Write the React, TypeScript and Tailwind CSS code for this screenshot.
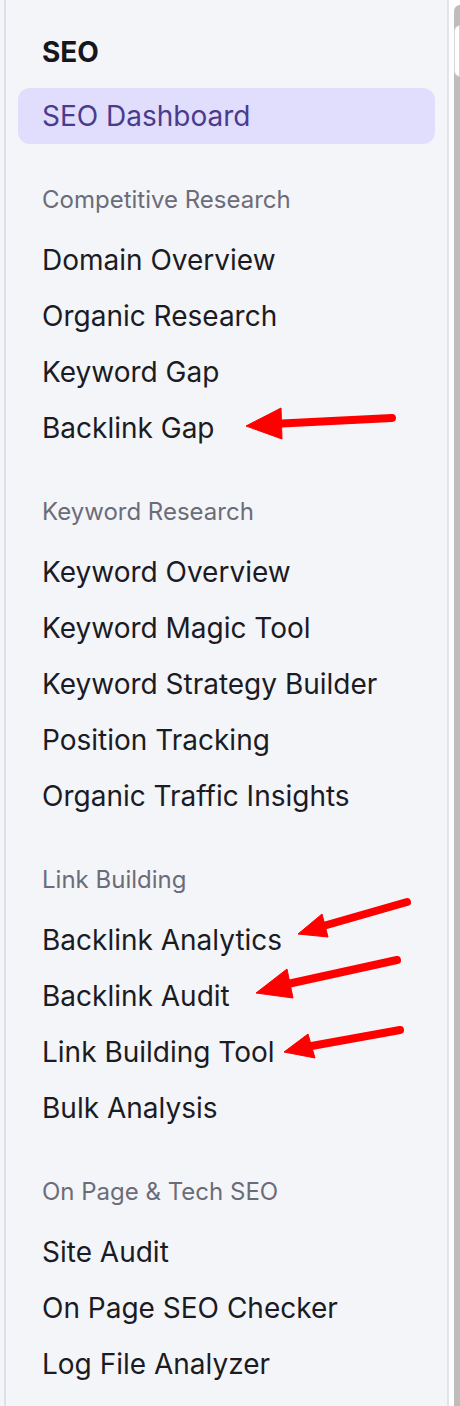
const sections = [
  {
    title: "Competitive Research",
    items: ["Domain Overview", "Organic Research", "Keyword Gap", "Backlink Gap"],
  },
  {
    title: "Keyword Research",
    items: [
      "Keyword Overview",
      "Keyword Magic Tool",
      "Keyword Strategy Builder",
      "Position Tracking",
      "Organic Traffic Insights",
    ],
  },
  {
    title: "Link Building",
    items: ["Backlink Analytics", "Backlink Audit", "Link Building Tool", "Bulk Analysis"],
  },
  {
    title: "On Page & Tech SEO",
    items: ["Site Audit", "On Page SEO Checker", "Log File Analyzer"],
  },
]

// red annotation arrows: tail -> tip, plus the two head corners
const arrows = [
  { tail: [392, 418], tip: [246, 426], a: [281, 408], b: [282, 439] },
  { tail: [407, 902], tip: [298, 934], a: [322, 914], b: [328, 937] },
  { tail: [397, 960], tip: [256, 993], a: [287, 969], b: [293, 998] },
  { tail: [400, 1030], tip: [284, 1052], a: [308, 1034], b: [315, 1058] },
]

function Arrows() {
  return (
    <svg className="pointer-events-none absolute left-0 top-0" width="460" height="1406" viewBox="0 0 460 1406">
      {arrows.map((ar, i) => {
        const mx = (ar.a[0] + ar.b[0]) / 2
        const my = (ar.a[1] + ar.b[1]) / 2
        return (
          <g key={i} fill="#ff0000" stroke="#ff0000">
            <line x1={ar.tail[0]} y1={ar.tail[1]} x2={mx} y2={my} strokeWidth="8" strokeLinecap="round" />
            <polygon points={`${ar.tip[0]},${ar.tip[1]} ${ar.a[0]},${ar.a[1]} ${ar.b[0]},${ar.b[1]}`} strokeWidth="1" strokeLinejoin="round" />
          </g>
        )
      })}
    </svg>
  )
}

export default function App() {
  return (
    <div
      className="relative flex h-[1406px] w-[460px] overflow-hidden bg-white"
      style={{ fontFamily: "Inter, 'Noto Sans', sans-serif" }}
    >
      <div className="flex h-full w-[449px] border-r-2 border-[#e3e4ea] bg-[#f4f5f9]">
        <div className="ml-[4px] h-full w-[2px] bg-[#dfe0e7]" />
        <nav className="flex w-[429px] flex-col pl-[12px]">
          <div className="flex h-[88px] items-end pb-[18px] pl-[24px] text-[28px] font-bold leading-[36px] text-[#16161d]">
            SEO
          </div>
          <div className="flex h-[56px] items-center rounded-[12px] bg-[#e1ddfc] pl-[24px] text-[28px] leading-[36px] text-[#4b3b8c]">
            SEO Dashboard
          </div>
          {sections.map((s) => (
            <div key={s.title} className="flex flex-col">
              <div className="flex h-[88px] items-end pb-[17px] pl-[24px] text-[24px] leading-[30px] text-[#6c6c78]">
                {s.title}
              </div>
              {s.items.map((it) => (
                <div key={it} className="flex h-[56px] items-center pl-[24px] text-[28px] leading-[36px] text-[#1b1b24]">
                  {it}
                </div>
              ))}
            </div>
          ))}
        </nav>
      </div>
      <div className="w-[5px] bg-white" />
      <div className="relative mt-[5px] flex-1 rounded-tl-[6px] bg-[#bdbdbd]">
        <div className="absolute left-0 top-[20px] h-[52px] w-full rounded-l-[10px] border border-[#d6d6d6] bg-white" />
      </div>
      <Arrows />
    </div>
  )
}
